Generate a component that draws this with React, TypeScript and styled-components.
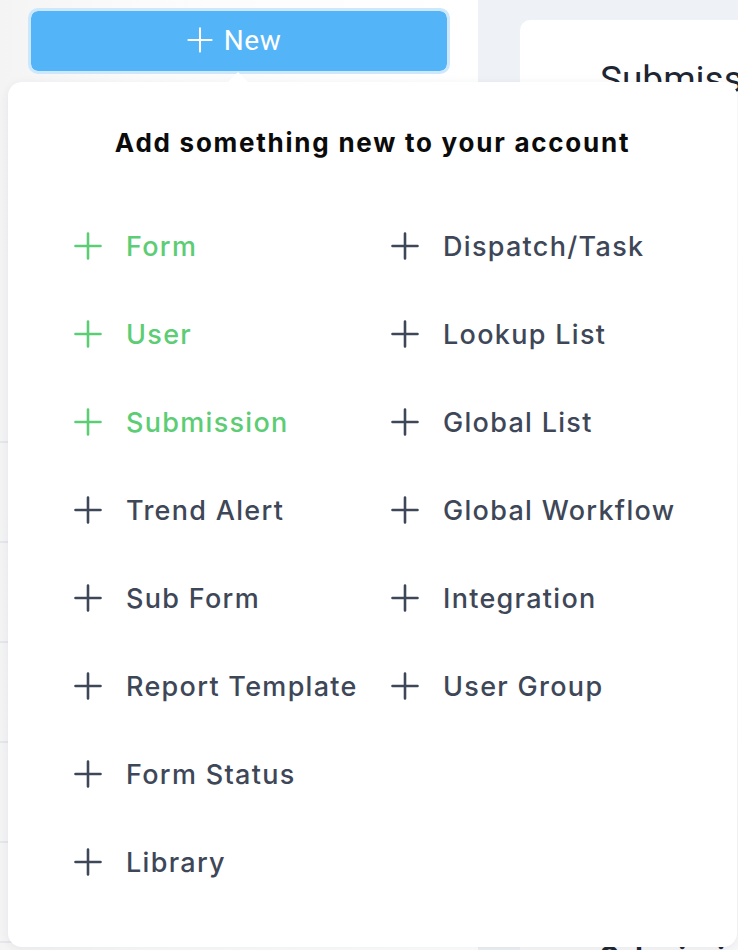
import React from "react";
import styled, { createGlobalStyle } from "styled-components";

const GlobalStyle = createGlobalStyle`
  html, body {
    margin: 0;
    padding: 0;
    height: 100%;
  }
  body {
    font-family: Inter, "Noto Sans", sans-serif;
    background: #eef1f5;
  }
  #root {
    height: 100%;
  }
`;

const colors = {
  green: "#5ccd74",
  slate: "#3e4757",
  blue: "#54b4f8",
  ring: "#cde7fc",
};

interface MenuItem {
  label: string;
  highlight?: boolean;
}

const leftItems: MenuItem[] = [
  { label: "Form", highlight: true },
  { label: "User", highlight: true },
  { label: "Submission", highlight: true },
  { label: "Trend Alert" },
  { label: "Sub Form" },
  { label: "Report Template" },
  { label: "Form Status" },
  { label: "Library" },
];

const rightItems: MenuItem[] = [
  { label: "Dispatch/Task" },
  { label: "Lookup List" },
  { label: "Global List" },
  { label: "Global Workflow" },
  { label: "Integration" },
  { label: "User Group" },
];

const PlusIcon = ({ size = 28, stroke = 2.6 }: { size?: number; stroke?: number }) => (
  <svg width={size} height={size} viewBox="0 0 28 28" fill="none">
    <path
      d="M14 1.5v25M1.5 14h25"
      stroke="currentColor"
      strokeWidth={stroke}
      strokeLinecap="round"
    />
  </svg>
);

export default function App() {
  return (
    <>
      <GlobalStyle />
      <Page>
        <Sidebar>
          <NewArea>
            <NewButton type="button">
              <PlusIcon size={26} stroke={2.2} />
              New
            </NewButton>
            <Dropdown>
              <Caret />
              <Heading>Add something new to your account</Heading>
              <Columns>
                <Column>
                  {leftItems.map((item) => (
                    <Item key={item.label} $highlight={item.highlight}>
                      <PlusIcon />
                      <span>{item.label}</span>
                    </Item>
                  ))}
                </Column>
                <Column>
                  {rightItems.map((item) => (
                    <Item key={item.label} $highlight={item.highlight}>
                      <PlusIcon />
                      <span>{item.label}</span>
                    </Item>
                  ))}
                </Column>
              </Columns>
            </Dropdown>
          </NewArea>
          <SidebarList>
            {Array.from({ length: 6 }).map((_, i) => (
              <SidebarRow key={i} />
            ))}
          </SidebarList>
        </Sidebar>
        <Main>
          <Card>
            <CardTitle>Submissions</CardTitle>
            <CardBody>Submission {"{}"}</CardBody>
          </Card>
        </Main>
      </Page>
    </>
  );
}

const Page = styled.div`
  display: flex;
  height: 950px;
  overflow: hidden;
`;

const Sidebar = styled.aside`
  width: 478px;
  flex-shrink: 0;
  background: linear-gradient(90deg, #f4f4f5 0%, #fbfbfb 30%, #ffffff 100%);
  display: flex;
  flex-direction: column;
`;

const NewArea = styled.div`
  position: relative;
  padding: 8px 28px 0;
  z-index: 2;
`;

const NewButton = styled.button`
  width: 100%;
  height: 66px;
  display: flex;
  align-items: center;
  justify-content: center;
  gap: 11px;
  padding: 0 10px 2px 0;
  border: 3px solid ${colors.ring};
  border-radius: 10px;
  background: ${colors.blue};
  background-clip: padding-box;
  color: #ffffff;
  font-family: Roboto, "Liberation Sans", sans-serif;
  font-size: 28px;
  letter-spacing: 0.6px;
  font-weight: 400;
  cursor: pointer;
`;

const Dropdown = styled.div`
  position: absolute;
  top: 82px;
  left: 8px;
  width: 729px;
  height: 865px;
  box-sizing: border-box;
  padding: 41px 0 0 66px;
  background: #ffffff;
  border-radius: 14px;
  box-shadow: 0 2px 10px rgba(40, 50, 70, 0.08);
`;

const Caret = styled.div`
  position: absolute;
  top: -10px;
  left: 220px;
  width: 0;
  height: 0;
  border-left: 10px solid transparent;
  border-right: 10px solid transparent;
  border-bottom: 10px solid #ffffff;
`;

const Heading = styled.h2`
  margin: 0 0 39px -66px;
  height: 40px;
  line-height: 40px;
  text-align: center;
  font-size: 26px;
  letter-spacing: 1.75px;
  font-weight: 700;
  color: #0b0b0c;
`;

const Columns = styled.div`
  display: grid;
  grid-template-columns: 317px 1fr;
`;

const Column = styled.div`
  display: flex;
  flex-direction: column;
`;

const Item = styled.div<{ $highlight?: boolean }>`
  height: 88px;
  display: flex;
  align-items: center;
  gap: 24px;
  color: ${(p) => (p.$highlight ? colors.green : colors.slate)};
  font-size: 27px;
  letter-spacing: 1.3px;
  font-weight: 500;
  white-space: nowrap;
  cursor: pointer;

  svg {
    flex-shrink: 0;
  }
`;

const SidebarList = styled.div`
  margin-top: 367px;
  display: flex;
  flex-direction: column;
`;

const SidebarRow = styled.div`
  height: 98px;
  border-top: 2px solid #e6e7eb;
`;

const Main = styled.main`
  flex: 1;
  padding: 20px 0 0 42px;
  background: #eef1f5;
`;

const Card = styled.section`
  height: 940px;
  padding: 38px 0 0 80px;
  background: linear-gradient(180deg, #ffffff 0%, #f8f8f9 100%);
  border-radius: 10px 0 0 10px;
  box-sizing: border-box;
  display: flex;
  flex-direction: column;
`;

const CardTitle = styled.h1`
  margin: 0;
  font-family: Roboto, "Liberation Sans", sans-serif;
  font-size: 37px;
  font-weight: 400;
  color: #1e2633;
  white-space: nowrap;
`;

const CardBody = styled.div`
  margin-top: auto;
  transform: translateY(14px);
  font-family: Roboto, "Liberation Sans", sans-serif;
  font-size: 30px;
  font-weight: 700;
  color: #1e2633;
  white-space: nowrap;
`;
